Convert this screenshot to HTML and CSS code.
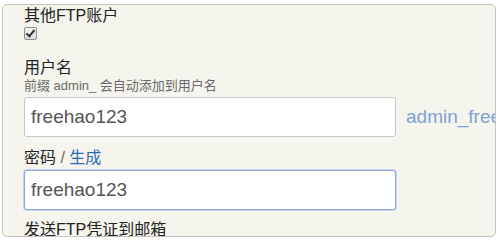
FILE: index.html
```html
<!DOCTYPE html>
<html lang="zh-CN">
<head>
    <meta charset="UTF-8">
    <title>其他FTP账户</title>
    <link rel="stylesheet" href="styles.css">
</head>
<body>
    <div class="panel">
        <div class="title">其他FTP账户</div>
        <input type="checkbox" class="check" checked>

        <div class="label">用户名</div>
        <div class="hint">前缀 admin_ 会自动添加到用户名</div>
        <div class="row">
            <input type="text" class="field" value="freehao123">
            <span class="suffix">admin_freehao123</span>
        </div>

        <div class="label label-pass">密码 <span class="sep">/</span> <a href="#" class="gen">生成</a></div>
        <div class="row">
            <input type="text" class="field focused" value="freehao123">
        </div>

        <div class="label label-mail">发送FTP凭证到邮箱</div>
    </div>
</body>
</html>
```

FILE: styles.css
```css
body {
    margin: 0;
    background: #fff;
    font-family: 'Liberation Sans', 'Noto Sans CJK SC', sans-serif;
    color: #222;
}
.panel {
    margin: 4px 0 0 2px;
    width: 494px;
    height: 233px;
    box-sizing: border-box;
    padding: 1px 0 0 21px;
    background-color: #f5f4ed;
    border: 1px solid #c9c1bd;
    border-radius: 5px;
    overflow: hidden;
    white-space: nowrap;
}
.title {
    font-size: 16px;
    line-height: 20px;
}
.check {
    -webkit-appearance: none;
    appearance: none;
    display: block;
    position: relative;
    width: 13px;
    height: 13px;
    margin: 1px 0 0 0;
    border: 1px solid #8f8f8f;
    border-radius: 2px;
    background: linear-gradient(#f4f4f4, #d8d8d8);
    box-sizing: border-box;
}
.check:checked::after {
    content: "";
    position: absolute;
    left: 3px;
    top: 0px;
    width: 3px;
    height: 7px;
    border: solid #333;
    border-width: 0 2px 2px 0;
    transform: rotate(40deg);
}
.label {
    font-size: 16px;
    line-height: 20px;
    margin-top: 18px;
}
.hint {
    font-size: 13px;
    line-height: 16px;
    color: #6a6a6a;
}
.row {
    display: flex;
    align-items: center;
    margin-top: 3px;
}
.field {
    flex-shrink: 0;
    width: 372px;
    height: 40px;
    box-sizing: border-box;
    margin: 0;
    padding: 0 6px;
    border: 1px solid #c6c6c6;
    border-radius: 3px;
    background: #fff;
    font-family: 'Liberation Sans', sans-serif;
    font-size: 19px;
    color: #555;
    outline: none;
}
.field.focused {
    border-color: #8ea8dc;
    box-shadow: 0 0 0 1px #c5d4ef;
}
.suffix {
    margin-left: 10px;
    font-size: 19px;
    color: #7fa2d6;
}
.label-pass {
    margin-top: 11px;
}
.label-pass + .row {
    margin-top: 2px;
}
.sep {
    color: #666;
}
.gen {
    color: #2b6cb3;
    text-decoration: none;
}
.label-mail {
    margin-top: 10px;
}
```
